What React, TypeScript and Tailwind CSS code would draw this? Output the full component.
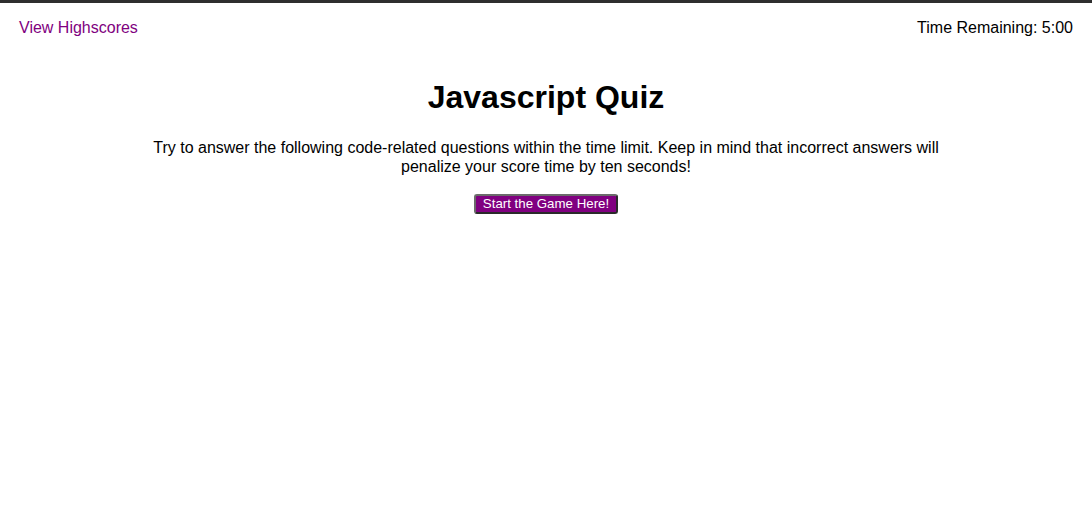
export default function App() {
  return (
    <div className="min-h-[519px] bg-white font-['Liberation_Sans',Arial,sans-serif] text-black">
      <div className="h-[3px] bg-[#2e2e2e]" />
      <header className="flex items-center justify-between px-[19px] pt-[15px] text-base leading-[19px]">
        <a href="#" className="text-[#800080]">
          View Highscores
        </a>
        <span>Time Remaining: 5:00</span>
      </header>

      <main className="flex flex-col items-center">
        <h1 className="mt-[42px] text-[32px] font-bold leading-[37px]">Javascript Quiz</h1>
        <p className="mt-[22px] w-[800px] text-center text-base leading-[19px]">
          Try to answer the following code-related questions within the time limit. Keep in mind that incorrect
          answers will penalize your score time by ten seconds!
        </p>
        <button className="mt-[18px] h-[20px] rounded-[3px] border-2 border-[#6b6b6b] border-b-[#2a2a2a] border-r-[#2a2a2a] bg-[#800080] px-[7px] text-[13.3px] leading-[14px] text-white">
          Start the Game Here!
        </button>
      </main>
    </div>
  );
}
